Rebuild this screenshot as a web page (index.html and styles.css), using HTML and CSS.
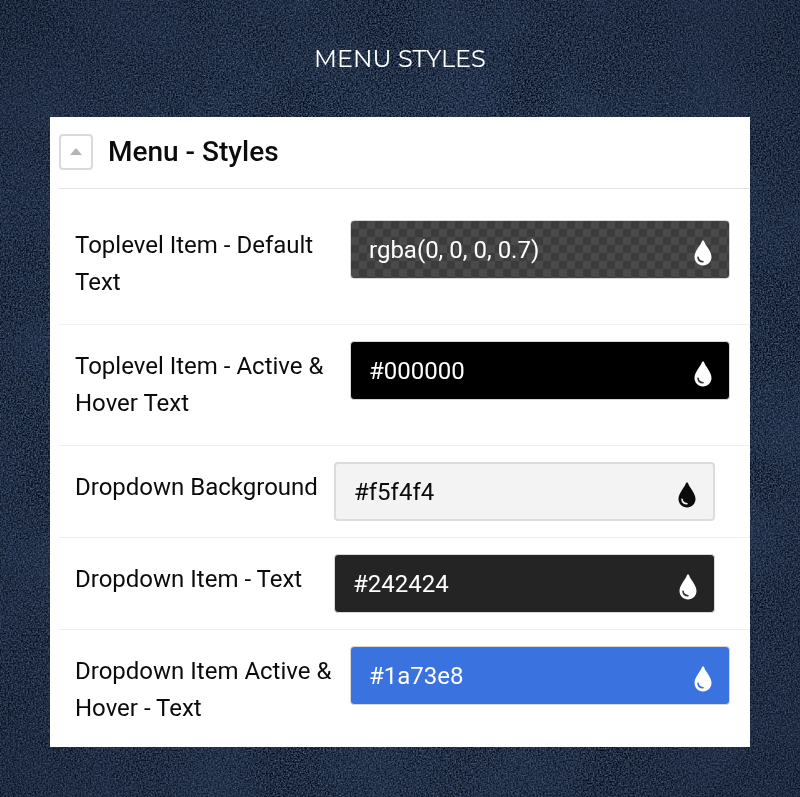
FILE: index.html
```
<!DOCTYPE html>
<html lang="en">
<head>
	<meta charset="utf-8">
	<meta name="viewport" content="width=device-width, initial-scale=1">
	<title>Menu Styles</title>
	<link rel="stylesheet" href="styles.css">
</head>
<body>
	<!-- denim grain -->
	<svg class="denim" aria-hidden="true">
		<filter id="grain" x="0" y="0" width="100%" height="100%" color-interpolation-filters="sRGB">
			<feTurbulence type="fractalNoise" baseFrequency="0.6" numOctaves="3" seed="4" />
			<feColorMatrix values="0.62 0 0 0 -0.18  0.65 0 0 0 -0.14  0.76 0 0 0 -0.11  0 0 0 0 1" />
		</filter>
		<filter id="patches" x="0" y="0" width="100%" height="100%" color-interpolation-filters="sRGB">
			<feTurbulence type="fractalNoise" baseFrequency="0.012" numOctaves="5" seed="9" />
			<feColorMatrix values="0 0 0 0 0.21  0 0 0 0 0.28  0 0 0 0 0.41  0.7 0 0 0 -0.2" />
		</filter>
		<radialGradient id="vignette" r="0.75">
			<stop offset="0.4" stop-color="#141c2e" stop-opacity="0" />
			<stop offset="1" stop-color="#141c2e" stop-opacity="0.4" />
		</radialGradient>
		<rect width="100%" height="100%" filter="url(#grain)" />
		<rect width="100%" height="100%" filter="url(#patches)" />
		<rect width="100%" height="100%" fill="url(#vignette)" />
	</svg>
	<svg class="symbols" aria-hidden="true">
		<symbol id="drop" viewBox="0 0 18 26">
			<path d="M9 0.5C8.3 0.5 8 1 7.7 1.8C6.3 6.1 0.5 11 0.5 17C0.5 21.8 4.2 25.5 9 25.5S17.5 21.8 17.5 17C17.5 11 11.7 6.1 10.3 1.8C10 1 9.7 0.5 9 0.5Z" fill="currentColor" stroke="none" />
			<path d="M4 17.2C4.3 20 6.2 21.7 9 21.8" fill="none" stroke-width="1.6" stroke-linecap="round" />
		</symbol>
	</svg>

	<main class="page">
		<h1 class="page-title">MENU STYLES</h1>

		<section class="panel">
			<header class="panel-header">
				<button class="toggle" type="button" aria-label="Collapse">
					<svg width="12" height="7" viewBox="0 0 12 7"><path d="M0 7L5 1Q6 0 7 1L12 7Z" fill="#b4b4b6" /></svg>
				</button>
				<h2 class="panel-title">Menu - Styles</h2>
			</header>

			<form class="options">
				<div class="row first">
					<label for="top-default">Toplevel Item - Default Text</label>
					<div class="field checker">
						<input id="top-default" type="text" value="rgba(0, 0, 0, 0.7)">
						<svg class="drop"><use href="#drop" /></svg>
					</div>
				</div>
				<div class="row">
					<label for="top-active">Toplevel Item - Active &amp; Hover Text</label>
					<div class="field black">
						<input id="top-active" type="text" value="#000000">
						<svg class="drop"><use href="#drop" /></svg>
					</div>
				</div>
				<div class="row single">
					<label for="drop-bg">Dropdown Background</label>
					<div class="field light">
						<input id="drop-bg" type="text" value="#f5f4f4">
						<svg class="drop"><use href="#drop" /></svg>
					</div>
				</div>
				<div class="row single">
					<label for="drop-text">Dropdown Item - Text</label>
					<div class="field dark">
						<input id="drop-text" type="text" value="#242424">
						<svg class="drop"><use href="#drop" /></svg>
					</div>
				</div>
				<div class="row">
					<label for="drop-active">Dropdown Item Active &amp; Hover - Text</label>
					<div class="field blue">
						<input id="drop-active" type="text" value="#1a73e8">
						<svg class="drop"><use href="#drop" /></svg>
					</div>
				</div>
			</form>
		</section>
	</main>
</body>
</html>
```
FILE: styles.css
```
* {
	box-sizing: border-box;
	margin: 0;
	padding: 0;
}
body {
	min-height: 100vh;
	background: #1f2c47;
	color: #0b0b0d;
	font-family: Roboto, "Liberation Sans", sans-serif;
}
.denim {
	position: fixed;
	top: 0;
	left: 0;
	width: 100%;
	height: 100%;
	z-index: -1;
}
.symbols {
	position: absolute;
	width: 0;
	height: 0;
}
.page {
	padding: 43px 50px 50px;
}
.page-title {
	margin-bottom: 42px;
	color: #fff;
	font-family: Montserrat, Inter, sans-serif;
	font-size: 24px;
	font-weight: 400;
	line-height: 32px;
	text-align: center;
}
.panel {
	padding-left: 9px;
	background: #fff;
}
.panel-header {
	display: flex;
	align-items: center;
	gap: 15px;
	height: 72px;
	padding-bottom: 2px;
	border-bottom: 1px solid #e4e4e4;
}
.toggle {
	display: flex;
	align-items: center;
	justify-content: center;
	width: 34px;
	height: 36px;
	border: 2px solid #dadadc;
	border-radius: 4px;
	background: #fff;
	cursor: pointer;
}
.panel-title {
	font-size: 28px;
	font-weight: 500;
	line-height: 36px;
}
.row {
	display: flex;
	align-items: flex-start;
	padding: 16px 20px 16px 16px;
	border-bottom: 1px solid #f0f0f0;
}
.row.first {
	padding-top: 31px;
}
.row.single {
	padding-right: 35px;
}
.row:last-child {
	padding-bottom: 13px;
	border-bottom: 0;
}
.row label {
	flex: 0 0 275px;
	padding: 7px 12px 7px 0;
	font-size: 24px;
	line-height: 37px;
}
.row.single label {
	flex-basis: 259px;
	padding-right: 0;
	padding-bottom: 0;
}
.field {
	display: flex;
	flex: 1;
	align-items: center;
	height: 59px;
	padding: 0 17px 0 18px;
	border: 1px solid #d8d8d8;
	border-radius: 4px;
	color: #fff;
}
.field input {
	flex: 1;
	min-width: 0;
	height: 36px;
	border: 0;
	outline: 0;
	background: transparent;
	color: inherit;
	font: 24px/36px Roboto, "Liberation Sans", sans-serif;
}
.drop {
	width: 18px;
	height: 26px;
	margin-top: 7px;
	stroke: #333;
}
.checker {
	background: repeating-conic-gradient(#3c3c3c 0 25%, #4a4a4a 0 50%) 0 0 / 16px 16px;
}
.black {
	background: #000;
}
.light {
	border: 2px solid #dcdcdc;
	background: #f3f3f3;
	color: #0b0b0d;
}
.light .drop {
	stroke: #f3f3f3;
}
.dark {
	background: #242424;
}
.blue {
	background: #3a72e0;
}
.blue .drop {
	stroke: #3a72e0;
}
```
